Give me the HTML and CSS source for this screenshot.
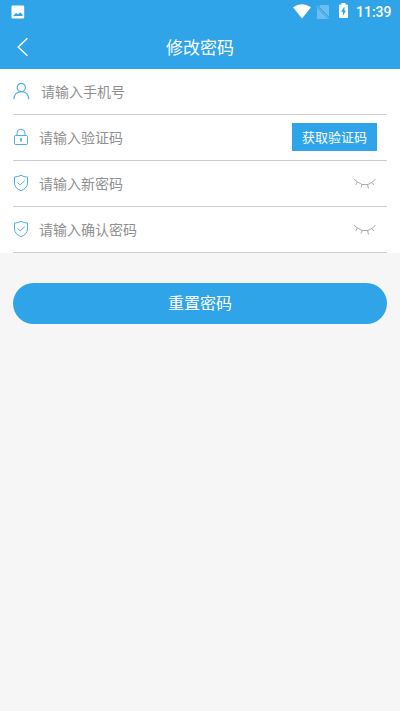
FILE: index.html
```html
<!DOCTYPE html>
<html lang="zh-CN">
<head>
<meta charset="utf-8">
<meta name="viewport" content="width=device-width, initial-scale=1">
<title>修改密码</title>
<link rel="stylesheet" href="styles.css">
</head>
<body>
<header class="top">
  <div class="status">
    <svg class="photo" width="14" height="14" viewBox="0 0 14 14"><path fill="#fff" fill-rule="evenodd" d="M1.500.5h10.500Q13.200.5 13.200 1.700v10.600q0 1.200-1.200 1.200H1.500Q.5 13.500.5 12.300V1.700Q.5.500 1.500.5zM2 11h9.500V9.500L9.300 7.200 7.300 9.300 5 8z"/></svg>
    <svg class="wifi" width="18" height="15" viewBox="0 0 18 15"><path fill="#fff" d="M0 3.300Q9-3 18 3.300L9 14.500z"/></svg>
    <svg class="sim" width="14" height="14" viewBox="0 0 14 14"><path fill="#fff" opacity=".3" d="M4.500 0H12q1 0 1 1v10.500L3 1.500zM1 3L12 14H2q-1 0-1-1z"/><path stroke="#fff" opacity=".3" d="M.5 1l12.500 12.500"/></svg>
    <svg class="battery" width="9" height="15" viewBox="0 0 9 15"><path fill="#fff" fill-rule="evenodd" d="M2.500 0h4v1.500H8q1 0 1 1V14q0 1-1 1H1q-1 0-1-1V2.500q0-1 1-1h1.500zM5.500 3.500L2 8.700h2v4L7 7.500H5.500z"/></svg>
    <span class="time">11:39</span>
  </div>
  <div class="nav">
    <svg class="back" width="12" height="20" viewBox="0 0 12 20"><path d="M10.400 1.200L1.200 10l9.200 8.800" fill="none" stroke="#fff" stroke-width="1.500"/></svg>
    <h1>修改密码</h1>
  </div>
</header>
<main>
  <div class="form">
    <div class="row phone">
      <svg class="icon" width="17" height="18" viewBox="0 0 17 18"><circle cx="8.300" cy="5.500" r="4.100"/><path d="M.8 17.300c.2-4.600 3.200-7.600 7.500-7.600s7.300 3 7.500 7.600"/></svg>
      <span class="hint">请输入手机号</span>
    </div>
    <div class="row">
      <svg class="icon thin" width="16" height="18" viewBox="0 0 16 18"><rect x="1.500" y="7.500" width="13" height="9" rx="1"/><path d="M4 7.500V5.200q0-4 4-4t4 4v2.300"/><path class="solid" d="M7 10.200h2v2.300H8.500v1.500h-1v-1.500H7z"/></svg>
      <span class="hint">请输入验证码</span>
      <button class="code">获取验证码</button>
    </div>
    <div class="row">
      <svg class="icon shield" width="16" height="18" viewBox="0 0 16 18"><path d="M8 1.300Q11 3 14.500 3v6q0 5-6.500 7.700Q1.500 14 1.500 9V3Q5 3 8 1.300z"/><path d="M4.500 8.500l2.700 2.400 4.500-4.200"/></svg>
      <span class="hint">请输入新密码</span>
      <svg class="eye" width="24" height="12" viewBox="0 0 24 12"><path d="M1.200 1.200L4.500 4 9 6.500h6L19.500 4l3-3M4.500 4L2.700 7M9 6.500L8 9.500M14.500 6.500l1 4M18.700 4.300l2.200 2.700"/></svg>
    </div>
    <div class="row">
      <svg class="icon shield" width="16" height="18" viewBox="0 0 16 18"><path d="M8 1.300Q11 3 14.500 3v6q0 5-6.500 7.700Q1.500 14 1.500 9V3Q5 3 8 1.300z"/><path d="M4.500 8.500l2.700 2.400 4.500-4.200"/></svg>
      <span class="hint">请输入确认密码</span>
      <svg class="eye" width="24" height="12" viewBox="0 0 24 12"><path d="M1.200 1.200L4.500 4 9 6.500h6L19.500 4l3-3M4.500 4L2.700 7M9 6.500L8 9.500M14.500 6.500l1 4M18.700 4.300l2.200 2.700"/></svg>
    </div>
  </div>
  <button class="submit">重置密码</button>
</main>
</body>
</html>
```

FILE: styles.css
```css
* { box-sizing: border-box; }
body {
  margin: 0;
  min-height: 711px;
  background: #f6f6f6;
  font-family: Roboto, "Noto Sans CJK SC", sans-serif;
}
svg { display: block; flex: none; }
button { border: 0; padding: 0; color: #fff; font-family: inherit; background: #30a4e8; }
.top { height: 69px; background: #30a4e8; color: #fff; }
.status { height: 24px; display: flex; align-items: center; padding: 0 8px 0 11px; }
.wifi { margin-left: auto; margin-top: -1px; }
.sim { margin-left: 5px; }
.battery { margin-left: 9px; margin-top: -3px; }
.time { width: 36px; margin-left: 8px; font-size: 14px; line-height: 24px; font-weight: 500; white-space: nowrap; }
.nav { height: 45px; display: grid; grid-template-columns: 60px 1fr 60px; align-items: center; }
.back { margin-left: 17px; }
h1 { margin: 0; padding-top: 3px; text-align: center; font-size: 17px; line-height: 25px; font-weight: 400; }
.form { padding: 0 13px; background: #fff; }
.row { height: 46px; display: flex; align-items: center; border-bottom: 1px solid #ccc; }
.icon { margin-bottom: 2px; fill: none; stroke: #4faee2; stroke-width: 1.2; }
.thin, .shield { stroke-width: 1; }
.solid { fill: #4faee2; stroke: none; }
.hint { margin-left: 10px; padding-top: 1px; color: #909090; font-size: 14px; line-height: 20px; }
.phone .hint { margin-left: 11px; }
.code { margin: 0 10px 1px auto; padding-bottom: 1px; width: 85px; height: 28px; font-size: 13px; }
.eye { margin-left: auto; margin-right: 10px; fill: none; stroke: #a0a0a0; stroke-width: .9; }
.submit { display: block; width: 374px; height: 41px; margin: 30px auto 0; padding-bottom: 3px; border-radius: 21px; font-size: 16px; }
```
